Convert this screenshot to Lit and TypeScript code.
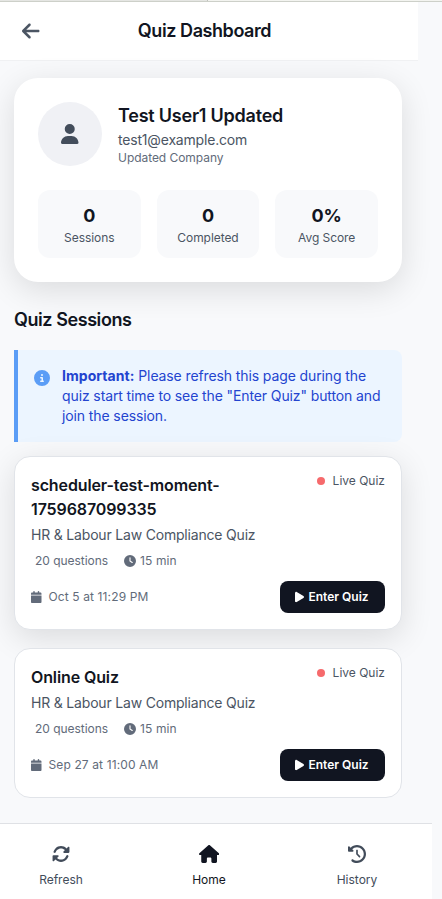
import { LitElement, html, css, svg } from "lit";
import { customElement, property } from "lit/decorators.js";

const ICONS: Record<string, [number, string]> = {
  back: [448, "M9.4 233.4c-12.5 12.5-12.5 32.8 0 45.3l160 160c12.5 12.5 32.8 12.5 45.3 0s12.5-32.8 0-45.3L109.2 288 416 288c17.7 0 32-14.3 32-32s-14.3-32-32-32l-306.7 0L214.6 118.6c12.5-12.5 12.5-32.8 0-45.3s-32.8-12.5-45.3 0l-160 160z"],
  user: [448, "M224 256A128 128 0 1 0 224 0a128 128 0 1 0 0 256zm-45.7 48C79.8 304 0 383.8 0 482.3C0 498.7 13.3 512 29.7 512l388.6 0c16.4 0 29.7-13.3 29.7-29.7C448 383.8 368.2 304 269.7 304l-91.4 0z"],
  info: [512, "M256 512A256 256 0 1 0 256 0a256 256 0 1 0 0 512zM216 336l24 0 0-64-24 0c-13.3 0-24-10.7-24-24s10.7-24 24-24l48 0c13.3 0 24 10.7 24 24l0 88 8 0c13.3 0 24 10.7 24 24s-10.7 24-24 24l-80 0c-13.3 0-24-10.7-24-24s10.7-24 24-24zm40-208a32 32 0 1 1 0 64 32 32 0 1 1 0-64z"],
  clock: [512, "M256 0a256 256 0 1 1 0 512A256 256 0 1 1 256 0zM232 120l0 136c0 8 4 15.5 10.7 20l96 64c11 7.4 25.9 4.4 33.3-6.7s4.4-25.9-6.7-33.3L280 243.2 280 120c0-13.3-10.7-24-24-24s-24 10.7-24 24z"],
  calendar: [448, "M96 32l0 32L48 64C21.5 64 0 85.5 0 112l0 48 448 0 0-48c0-26.5-21.5-48-48-48l-48 0 0-32c0-17.7-14.3-32-32-32s-32 14.3-32 32l0 32L160 64l0-32c0-17.7-14.3-32-32-32S96 14.3 96 32zM448 192L0 192 0 464c0 26.5 21.5 48 48 48l352 0c26.5 0 48-21.5 48-48l0-272z"],
  play: [384, "M73 39c-14.8-9.1-33.4-9.4-48.5-.9S0 62.6 0 80L0 432c0 17.4 9.4 33.4 24.5 41.9s33.7 8.1 48.5-.9L361 297c14.3-8.7 23-24.2 23-41s-8.7-32.2-23-41L73 39z"],
  refresh: [512, "M142.9 142.9c-17.5 17.5-30.1 38-37.8 59.8c-5.9 16.7-24.2 25.4-40.8 19.5s-25.4-24.2-19.5-40.8C55.6 150.7 73.2 122 97.6 97.6c87.2-87.2 228.3-87.5 315.8-1L455 55c6.9-6.9 17.2-8.9 26.2-5.2s14.8 12.5 14.8 22.2l0 128c0 13.3-10.7 24-24 24l-8.4 0L344 224c-9.7 0-18.5-5.8-22.2-14.8s-1.7-19.3 5.2-26.2l41.1-41.1c-62.6-61.5-163.1-61.2-225.3 1zM16 312c0-13.3 10.7-24 24-24l7.6 0 .7 0L168 288c9.7 0 18.5 5.8 22.2 14.8s1.7 19.3-5.2 26.2l-41.1 41.1c62.6 61.5 163.1 61.2 225.3-1c17.5-17.5 30.1-38 37.8-59.8c5.9-16.7 24.2-25.4 40.8-19.5s25.4 24.2 19.5 40.8c-10.8 30.6-28.4 59.3-52.9 83.8c-87.2 87.2-228.3 87.5-315.8 1L57 457c-6.9 6.9-17.2 8.9-26.2 5.2S16 449.7 16 440l0-119.6 0-.7 0-7.6z"],
  home: [576, "M575.8 255.5c0 18-15 32.1-32 32.1l-32 0 .7 160.2c0 2.7-.2 5.4-.5 8.1l0 16.2c0 22.1-17.9 40-40 40l-16 0c-1.1 0-2.2 0-3.3-.1c-1.4 .1-2.8 .1-4.2 .1L416 512l-24 0c-22.1 0-40-17.9-40-40l0-24 0-64c0-17.7-14.3-32-32-32l-64 0c-17.7 0-32 14.3-32 32l0 64 0 24c0 22.1-17.9 40-40 40l-24 0-31.9 0c-1.5 0-3-.1-4.5-.2c-1.2 .1-2.4 .2-3.6 .2l-16 0c-22.1 0-40-17.9-40-40l0-112c0-.9 0-1.9 .1-2.8l0-69.7-32 0c-18 0-32-14-32-32.1c0-9 3-17 10-24L266.4 8c7-7 15-8 22-8s15 2 21 7L564.8 231.5c8 7 12 15 11 24z"],
  history: [512, "M75 75L41 41C25.9 25.9 0 36.6 0 57.9L0 168c0 13.3 10.7 24 24 24l110.1 0c21.4 0 32.1-25.9 17-41l-30.8-30.8C155 85.5 203 64 256 64c106 0 192 86 192 192s-86 192-192 192c-40.8 0-78.6-12.7-109.7-34.4c-14.5-10.1-34.4-6.6-44.6 7.9s-6.6 34.4 7.9 44.6C151.2 495 201.7 512 256 512c141.4 0 256-114.6 256-256S397.4 0 256 0C185.3 0 121.3 28.7 75 75zm181 53c-13.3 0-24 10.7-24 24l0 104c0 6.4 2.5 12.5 7 17l72 72c9.4 9.4 24.6 9.4 33.9 0s9.4-24.6 0-33.9l-65-65 0-94.1c0-13.3-10.7-24-24-24z"],
};

const icon = (name: string, size: number) => {
  const [w, d] = ICONS[name];
  return html`<svg width=${(size * w) / 512} height=${size} viewBox="0 0 ${w} 512" fill="currentColor" aria-hidden="true">${svg`<path d=${d}></path>`}</svg>`;
};

interface Quiz {
  title: string;
  topic: string;
  questions: number;
  minutes: number;
  date: string;
}

@customElement("quiz-card")
class QuizCard extends LitElement {
  @property({ attribute: false }) quiz!: Quiz;

  static styles = css`
    :host {
      display: block;
      box-sizing: border-box;
      border: 1px solid #e1e4e9;
      border-radius: 16px;
      background: #fff;
      padding: 16px;
    }
    :host([raised]) {
      box-shadow: 0 8px 32px rgba(0, 0, 0, 0.12);
    }
    svg { display: block; flex: none; }
    .top { display: flex; justify-content: space-between; align-items: flex-start; }
    .title { margin: 0; width: 200px; font-size: 16px; line-height: 24px; font-weight: 600; letter-spacing: -0.12px; color: #111521; overflow-wrap: break-word; }
    .live { display: flex; align-items: center; gap: 8px; font-size: 12px; line-height: 16px; color: #4b5563; }
    .dot { width: 8px; height: 8px; border-radius: 50%; background: #f66a6c; }
    .topic { margin: 4px 0 0; font-size: 14px; line-height: 20px; letter-spacing: -0.19px; color: #4b5563; }
    .meta { display: flex; align-items: center; gap: 16px; margin-top: 8px; padding-left: 4px; font-size: 12px; line-height: 16px; letter-spacing: -0.04px; color: #626b7a; }
    .time { display: flex; align-items: center; gap: 4px; letter-spacing: 0.1px; }
    .foot { display: flex; align-items: center; justify-content: space-between; margin-top: 12px; }
    .date { display: flex; align-items: center; gap: 7px; font-size: 12px; line-height: 16px; letter-spacing: 0.12px; color: #626b7a; }
    .enter { display: flex; align-items: center; justify-content: center; gap: 4px; width: 105px; height: 32px; padding: 0 1px 0 0; border: 0; border-radius: 8px; background: #111521; color: #fff; font: 600 12px/16px Inter, sans-serif; }
  `;

  render() {
    const q = this.quiz;
    return html`
      <div class="top">
        <h3 class="title">${q.title}</h3>
        <div class="live"><span class="dot"></span><span>Live Quiz</span></div>
      </div>
      <p class="topic">${q.topic}</p>
      <div class="meta">
        <span>${q.questions} questions</span>
        <span class="time">${icon("clock", 12)}<span>${q.minutes} min</span></span>
      </div>
      <div class="foot">
        <div class="date">${icon("calendar", 12)}<span>${q.date}</span></div>
        <button class="enter">${icon("play", 12)}<span>Enter Quiz</span></button>
      </div>
    `;
  }
}

@customElement("app-root")
class AppRoot extends LitElement {
  static styles = css`
    :host {
      display: flex;
      flex-direction: column;
      height: 100vh;
      overflow: hidden;
      background: #f8f9fb;
      font-family: Inter, "Liberation Sans", sans-serif;
      color: #111521;
    }
    svg { display: block; flex: none; }
    .edge { display: flex; flex: none; height: 1px; border-bottom: 1px solid #cdd0c9; background: #f3f4f0; }
    .tab { width: 207px; background: #e5e6e3; border-right: 1px solid #bfc1bc; }
    .header { display: grid; grid-template-columns: 40px 1fr 48px; align-items: center; flex: none; box-sizing: border-box; width: 418px; height: 59px; padding: 0 10px; background: #fff; border-bottom: 1px solid #f0f1f3; }
    .back { display: flex; justify-content: center; align-items: center; height: 40px; padding: 0 0 0 2px; border: 0; background: none; color: #4b5563; }
    .heading { margin: 0; padding-right: 1px; text-align: center; font-size: 18px; line-height: 28px; font-weight: 600; letter-spacing: -0.43px; }
    .main { flex: 1; width: 388px; padding: 17px 0 0 14px; min-height: 0; }
    .profile { box-sizing: border-box; height: 204px; padding: 24px; border-radius: 24px; background: #fff; box-shadow: 0 8px 32px rgba(0, 0, 0, 0.12); }
    .person { display: flex; gap: 16px; align-items: center; }
    .avatar { display: flex; align-items: center; justify-content: center; flex: none; width: 64px; height: 64px; border-radius: 50%; background: #f0f1f5; color: #434d5b; }
    .name { margin: 0; font-size: 18px; line-height: 28px; font-weight: 600; letter-spacing: -0.22px; }
    .email { font-size: 14px; line-height: 20px; letter-spacing: -0.18px; color: #4b5563; }
    .company { font-size: 12px; line-height: 16px; letter-spacing: -0.05px; color: #626b7a; }
    .stats { display: grid; grid-template-columns: repeat(3, 1fr); gap: 16px; margin-top: 24px; }
    .stat { box-sizing: border-box; height: 68px; padding: 12px 0; border-radius: 12px; background: #f8f9fb; text-align: center; }
    .value { font-size: 18px; line-height: 28px; font-weight: 700; }
    .label { font-size: 12px; line-height: 16px; letter-spacing: -0.06px; color: #4b5563; }
    .section { margin: 24px 0 16px; font-size: 18px; line-height: 28px; font-weight: 600; letter-spacing: -0.43px; }
    .notice { display: flex; gap: 12px; box-sizing: border-box; height: 92px; padding: 16px; border-left: 4px solid #5b9df6; border-radius: 0 8px 8px 0; background: #ecf5ff; color: #2344cf; }
    .mark { padding-top: 4px; color: #5b9df6; }
    .note { margin: 0; font-size: 14px; line-height: 20px; letter-spacing: -0.11px; }
    .strong { font-weight: 700; letter-spacing: 0.05px; }
    .list { display: flex; flex-direction: column; gap: 18px; margin-top: 14px; }
    .nav { display: flex; justify-content: space-between; flex: none; box-sizing: border-box; width: 432px; height: 76px; padding: 21px 44px 0 30px; border-top: 1px solid #dfe1e5; background: #fff; position: relative; }
    .item { display: flex; flex-direction: column; align-items: center; gap: 9px; width: 62px; font-size: 12px; line-height: 16px; color: #424c5a; }
    .middle { color: #111521; }
  `;

  private stats = [["0", "Sessions"], ["0", "Completed"], ["0%", "Avg Score"]];

  private quizzes: Quiz[] = [
    { title: "scheduler-test-moment-1759687099335", topic: "HR & Labour Law Compliance Quiz", questions: 20, minutes: 15, date: "Oct 5 at 11:29 PM" },
    { title: "Online Quiz", topic: "HR & Labour Law Compliance Quiz", questions: 20, minutes: 15, date: "Sep 27 at 11:00 AM" },
  ];

  render() {
    return html`
      <div class="edge"><div class="tab"></div></div>
      <header class="header">
        <button class="back" aria-label="Back">${icon("back", 20)}</button>
        <h1 class="heading">Quiz Dashboard</h1>
      </header>
      <main class="main">
        <section class="profile">
          <div class="person">
            <div class="avatar">${icon("user", 20)}</div>
            <div>
              <h2 class="name">Test User1 Updated</h2>
              <div class="email">test1@example.com</div>
              <div class="company">Updated Company</div>
            </div>
          </div>
          <div class="stats">
            ${this.stats.map(([v, l]) => html`<div class="stat"><div class="value">${v}</div><div class="label">${l}</div></div>`)}
          </div>
        </section>
        <h2 class="section">Quiz Sessions</h2>
        <div class="notice">
          <div class="mark">${icon("info", 16)}</div>
          <p class="note"><span class="strong">Important:</span> Please refresh this page during the quiz start time to see the "Enter Quiz" button and join the session.</p>
        </div>
        <div class="list">
          ${this.quizzes.map((q, i) => html`<quiz-card .quiz=${q} ?raised=${i === 0}></quiz-card>`)}
        </div>
      </main>
      <nav class="nav">
        <div class="item">${icon("refresh", 18)}<span>Refresh</span></div>
        <div class="item middle">${icon("home", 18)}<span>Home</span></div>
        <div class="item">${icon("history", 18)}<span>History</span></div>
      </nav>
    `;
  }
}
